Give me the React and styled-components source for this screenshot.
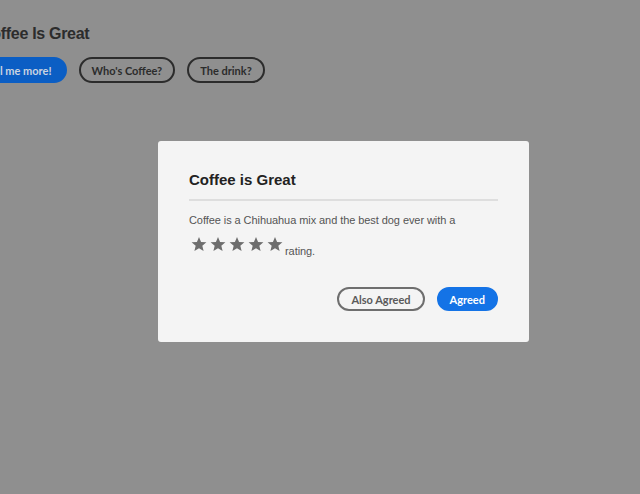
import React from "react";
import styled, { createGlobalStyle } from "styled-components";

const GlobalStyle = createGlobalStyle`
  html, body {
    margin: 0;
    padding: 0;
    background: #8f8f8f;
    overflow: hidden;
  }
  body {
    font-family: "Liberation Sans", Arial, sans-serif;
  }
`;

const Page = styled.main`
  margin-left: -20px;
  padding-top: 24px;
`;

const Heading = styled.h1`
  margin: 0 0 13px;
  font-family: "Liberation Sans", Arial, sans-serif;
  font-size: 16px;
  letter-spacing: -0.3px;
  font-weight: 700;
  line-height: 20px;
  color: #2c2c2c;
`;

const ButtonRow = styled.div`
  display: flex;
  gap: 12px;
  margin-left: -9px;
`;

const PillButton = styled.button`
  height: ${(p) => p.$h || 26}px;
  padding: 0 ${(p) => p.$px || 11}px;
  border-radius: 14px;
  border: 2px solid ${(p) => p.$border};
  background: ${(p) => p.$bg || "transparent"};
  color: ${(p) => p.$color};
  font-family: Lato, "Open Sans", sans-serif;
  font-size: ${(p) => p.$fs || 11}px;
  font-weight: 700;
  cursor: pointer;
  display: inline-flex;
  align-items: center;
  justify-content: center;
`;

const Underlay = styled.div`
  position: fixed;
  inset: 0;
  padding: 141px 0 0 158px;
`;

const Modal = styled.section`
  box-sizing: border-box;
  width: 371px;
  height: 201px;
  background: #f4f4f4;
  border-radius: 3px;
  padding: 30px 31px 31px;
  display: flex;
  flex-direction: column;
`;

const Title = styled.h2`
  margin: 0;
  padding-bottom: 10px;
  border-bottom: 2px solid #dedede;
  font-family: "Liberation Sans", Arial, sans-serif;
  font-size: 15px;
  font-weight: 700;
  line-height: 18px;
  color: #222;
`;

const Body = styled.div`
  margin-top: 12px;
  font-size: 11px;
  letter-spacing: -0.07px;
  line-height: 14px;
  color: #555;
`;

const RatingLine = styled.div`
  display: flex;
  align-items: flex-end;
  margin-top: 9px;
`;

const Stars = styled.span`
  display: inline-flex;
  gap: 3px;
  margin-left: 2px;
  margin-right: 2px;
`;

const Rating = styled.span`
  line-height: 11px;
  margin-bottom: -5px;
`;

const Actions = styled.div`
  margin-top: auto;
  display: flex;
  justify-content: flex-end;
  gap: 12px;
`;

function Star() {
  return (
    <svg width="16" height="16" viewBox="0 0 24 24">
      <path
        fill="#6e6e6e"
        d="M12 1.5l3.1 7.4 8 .6-6.1 5.2 1.9 7.8L12 18.3l-6.9 4.2 1.9-7.8L.9 9.5l8-.6z"
      />
    </svg>
  );
}

export default function App() {
  return (
    <>
      <GlobalStyle />
      <Page>
        <Heading>Coffee Is Great</Heading>
        <ButtonRow>
          <PillButton $bg="#0b5ec4" $border="#0b5ec4" $color="#c9d3e0" $px={13}>
            Tell me more!
          </PillButton>
          <PillButton $border="#2c2c2c" $color="#2c2c2c">
            Who's Coffee?
          </PillButton>
          <PillButton $border="#2c2c2c" $color="#2c2c2c">
            The drink?
          </PillButton>
        </ButtonRow>
      </Page>
      <Underlay>
        <Modal role="dialog">
          <Title>Coffee is Great</Title>
          <Body>
            Coffee is a Chihuahua mix and the best dog ever with a
            <RatingLine>
              <Stars>
                {[0, 1, 2, 3, 4].map((i) => (
                  <Star key={i} />
                ))}
              </Stars>
              <Rating>rating.</Rating>
            </RatingLine>
          </Body>
          <Actions>
            <PillButton $h={24} $fs={11} $px={12} $border="#6e6e6e" $color="#5a5a5a">
              Also Agreed
            </PillButton>
            <PillButton $h={24} $fs={11} $px={11} $bg="#1473e6" $border="#1473e6" $color="#fff">
              Agreed
            </PillButton>
          </Actions>
        </Modal>
      </Underlay>
    </>
  );
}
